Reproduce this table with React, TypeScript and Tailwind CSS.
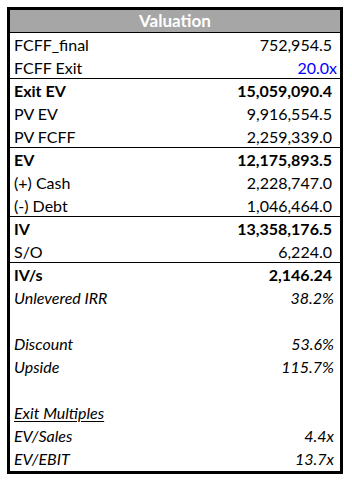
import React from "react";

type Row = {
  label: string;
  value?: string;
  bold?: boolean;
  italic?: boolean;
  underline?: boolean;
  blue?: boolean;
  line?: boolean;
  pr?: string;
};

const rows: Row[] = [
  { label: "FCFF_final", value: "752,954.5" },
  { label: "FCFF Exit", value: "20.0x", blue: true, line: true, pr: "pr-[3px]" },
  { label: "Exit EV", value: "15,059,090.4", bold: true },
  { label: "PV EV", value: "9,916,554.5" },
  { label: "PV FCFF", value: "2,259,339.0", line: true },
  { label: "EV", value: "12,175,893.5", bold: true },
  { label: "(+) Cash", value: "2,228,747.0" },
  { label: "(-) Debt", value: "1,046,464.0", line: true },
  { label: "IV", value: "13,358,176.5", bold: true },
  { label: "S/O", value: "6,224.0", line: true },
  { label: "IV/s", value: "2,146.24", bold: true },
  { label: "Unlevered IRR", value: "38.2%", italic: true, pr: "pr-[6px]" },
  { label: "" },
  { label: "Discount", value: "53.6%", italic: true, pr: "pr-[6px]" },
  { label: "Upside", value: "115.7%", italic: true, pr: "pr-[6px]" },
  { label: "" },
  { label: "Exit Multiples", italic: true, underline: true },
  { label: "EV/Sales", value: "4.4x", italic: true, pr: "pr-[6px]" },
  { label: "EV/EBIT", value: "13.7x", italic: true, pr: "pr-[6px]" },
];

export default function App() {
  return (
    <div
      className="w-[352px] h-[484px] bg-white pt-[7px] pl-[7px]"
      style={{ fontFamily: "Lato, 'Liberation Sans', sans-serif" }}
    >
      <div className="w-[336px] border-[3px] border-black box-border text-[16px] text-black">
        <div className="h-[23px] bg-[#a6a6a6] border-b border-black box-border flex items-center justify-center text-white font-bold text-[17px] leading-[22px]">
          Valuation
        </div>
        {rows.map((r, i) => (
          <div
            key={i}
            className={`h-[23px] box-border flex justify-between leading-[23px] pl-[4px] ${
              r.line ? "border-b border-black leading-[22px]" : ""
            } ${r.pr ?? "pr-[8px]"} ${r.bold ? "font-bold" : ""} ${
              r.italic ? "italic" : ""
            } ${i === rows.length - 1 ? "h-[24px]" : ""}`}
          >
            <span className={r.underline ? "underline underline-offset-2" : ""}>
              {r.label}
            </span>
            {r.value && (
              <span className={r.blue ? "text-[#0000ff]" : ""}>{r.value}</span>
            )}
          </div>
        ))}
      </div>
    </div>
  );
}
